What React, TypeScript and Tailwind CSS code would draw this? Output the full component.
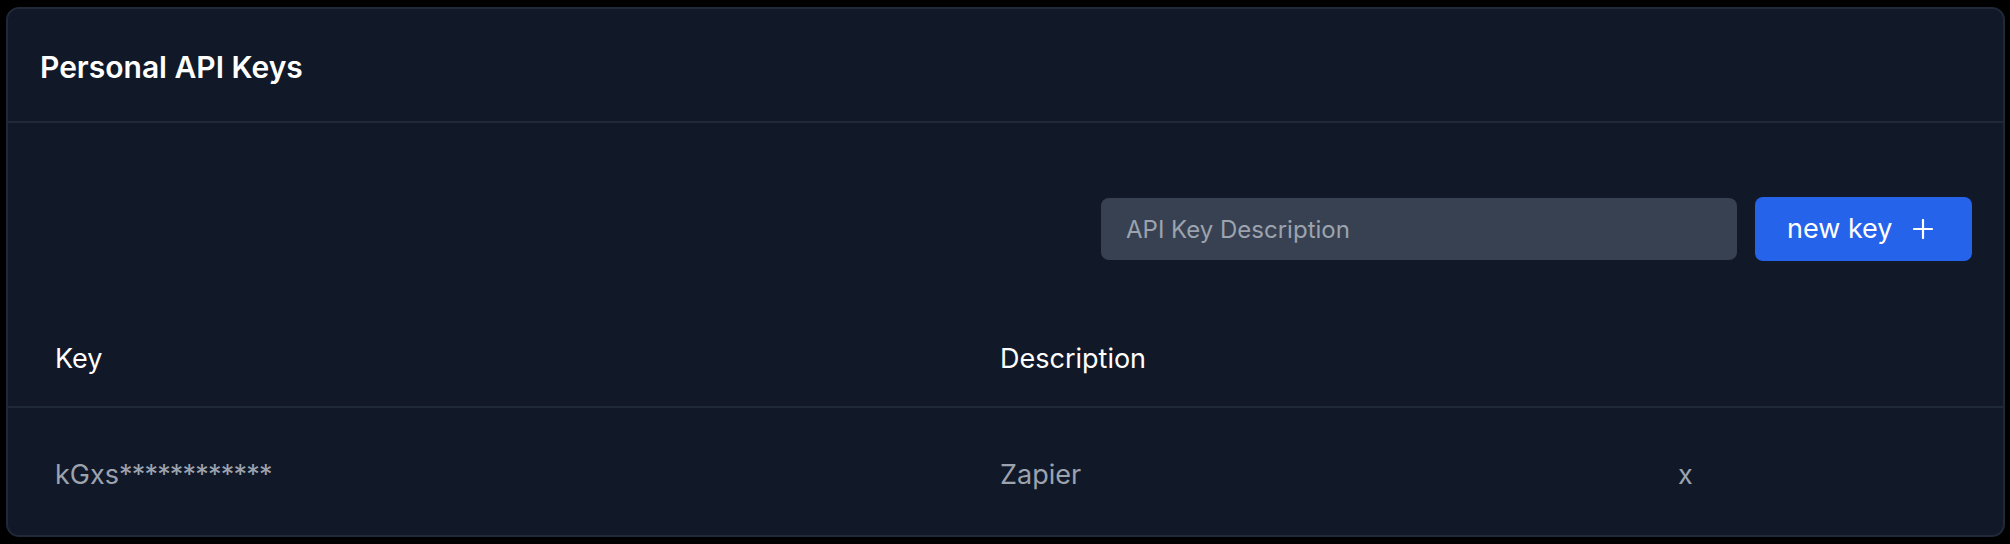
import React, { useState } from 'react';

type ApiKey = { id: number; key: string; description: string };

const App: React.FC = () => {
  const [description, setDescription] = useState('');
  const [keys, setKeys] = useState<ApiKey[]>([
    { id: 1, key: 'kGxs************', description: 'Zapier' },
  ]);

  // add a fake key locally, the real one comes from the server
  const addKey = () => {
    if (!description) return;
    setKeys([...keys, { id: Date.now(), key: 'new*************', description }]);
    setDescription('');
  };

  return (
    <div className="h-[544px] w-full bg-black pl-[6px] pr-[5px] pt-[7px] font-['Inter',sans-serif]">
      <div className="h-[530px] overflow-hidden rounded-[13px] border-2 border-[#1f2937] bg-[#111827]">
        {/* header */}
        <div className="flex h-[114px] items-center border-b-2 border-[#1f2937] pl-[32px] pt-[3px]">
          <h1 className="text-[30px] font-semibold leading-none text-white">Personal API Keys</h1>
        </div>

        {/* new key form */}
        <div className="mt-[74px] flex items-center justify-end gap-[18px] pr-[31px]">
          <input
            type="text"
            placeholder="API Key Description"
            value={description}
            onChange={(e) => setDescription(e.target.value)}
            className="h-[62px] w-[636px] rounded-lg bg-[#374151] pl-[25px] text-[24px] text-white outline-none placeholder:text-[#9ca3af]"
          />
          <button
            onClick={addKey}
            className="flex h-[64px] w-[217px] items-center gap-[20px] rounded-lg bg-[#2563eb] pl-[32px] text-[27px] text-white"
          >
            <span>new key</span>
            <svg width="20" height="20" viewBox="0 0 20 20" fill="none" stroke="currentColor" strokeWidth="2.2" strokeLinecap="round">
              <path d="M10 1v18M1 10h18" />
            </svg>
          </button>
        </div>

        {/* table */}
        <div className="mt-[51px] grid h-[96px] grid-cols-[945px_678px_1fr] items-center border-b-2 border-[#1f2937] pl-[47px] text-[27px] text-white">
          <div>Key</div>
          <div>Description</div>
          <div></div>
        </div>
        {keys.map((k) => {
          const star = k.key.indexOf('*');
          return (
            <div key={k.id} className="grid h-[129px] grid-cols-[945px_678px_1fr] items-center pl-[47px] pt-[5px] text-[27px] text-[#9ca3af]">
              <div>
                {k.key.slice(0, star)}
                <span className="tracking-[-0.8px]">{k.key.slice(star)}</span>
              </div>
              <div>{k.description}</div>
              <div>
                <button onClick={() => setKeys(keys.filter((x) => x.id !== k.id))} className="text-[27px] text-[#9ca3af]">
                  x
                </button>
              </div>
            </div>
          );
        })}
      </div>
    </div>
  );
};

export default App;
